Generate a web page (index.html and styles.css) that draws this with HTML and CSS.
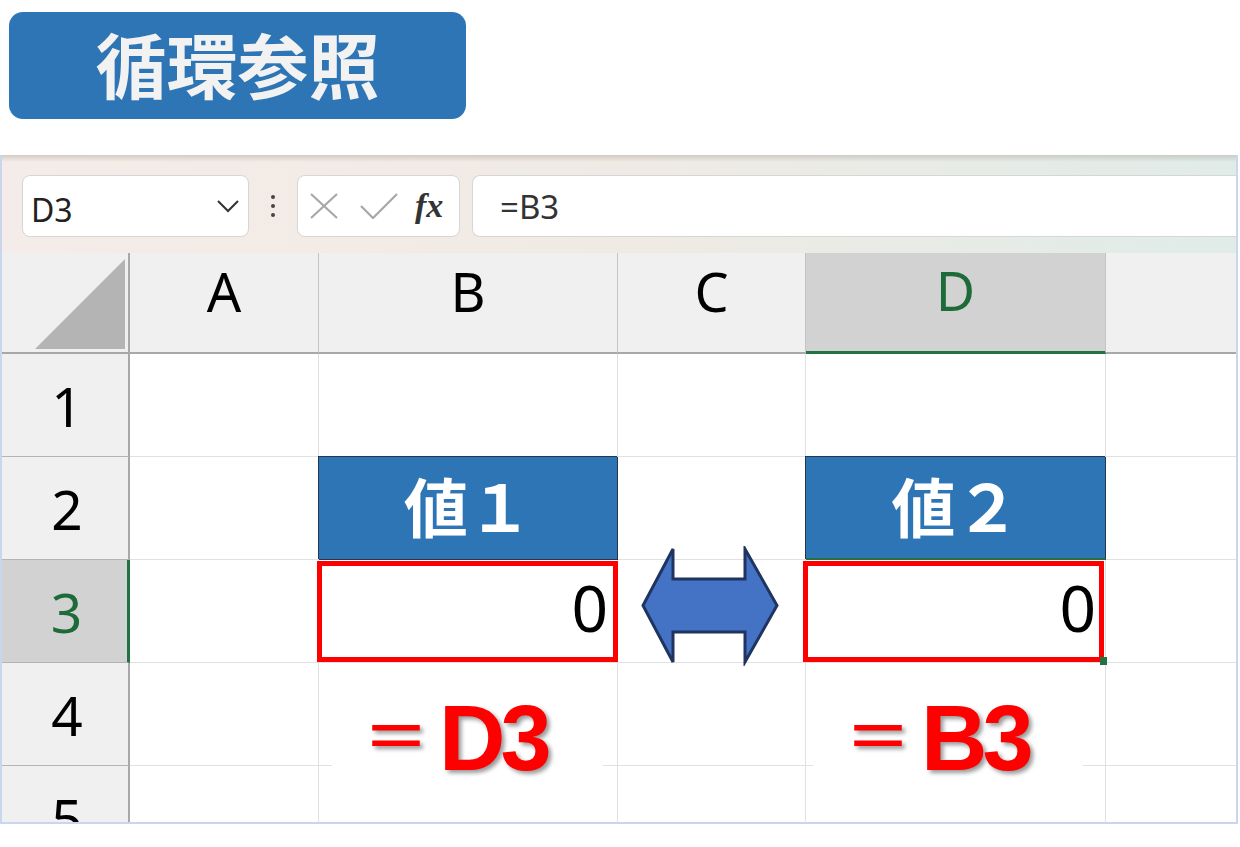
FILE: index.html
```html
<!DOCTYPE html>
<html lang="ja">
<head>
  <meta charset="UTF-8">
  <title>循環参照</title>
  <link rel="stylesheet" href="styles.css">
</head>
<body>
  <div class="title">循環参照</div>

  <div class="sheet">
    <div class="formula-bar">
      <div class="name-box">
        <span>D3</span>
        <svg class="chevron" width="24" height="14" viewBox="0 0 24 14"><polyline points="2,2 12,12 22,2" fill="none" stroke="#333" stroke-width="2"/></svg>
      </div>
      <div class="dots"><i></i><i></i><i></i></div>
      <div class="fx-box">
        <svg width="88" height="26" viewBox="0 0 88 26">
          <g fill="none" stroke="#a8a8a8" stroke-width="2.2">
            <line x1="1" y1="1" x2="27" y2="25"/>
            <line x1="27" y1="1" x2="1" y2="25"/>
            <polyline points="51,13 63,25 87,1"/>
          </g>
        </svg>
        <span class="fx">fx</span>
      </div>
      <div class="formula-input">=B3</div>
    </div>

    <div class="grid">
      <div class="corner">
        <svg width="128" height="101" viewBox="0 0 128 101"><polygon points="123,6 123,96 33,96" fill="#b4b4b4"/></svg>
      </div>
      <div class="col-head">A</div>
      <div class="col-head">B</div>
      <div class="col-head">C</div>
      <div class="col-head selected">D</div>
      <div class="col-head last"></div>

      <div class="row-head">1</div>
      <div class="cell"></div>
      <div class="cell"></div>
      <div class="cell"></div>
      <div class="cell"></div>
      <div class="cell last"></div>

      <div class="row-head">2</div>
      <div class="cell"></div>
      <div class="cell value-head">値１</div>
      <div class="cell"></div>
      <div class="cell value-head above-sel">値２</div>
      <div class="cell last"></div>

      <div class="row-head selected">3</div>
      <div class="cell"></div>
      <div class="cell value ref-b">0</div>
      <div class="cell"></div>
      <div class="cell value ref-d">0<span class="fill-handle"></span></div>
      <div class="cell last"></div>

      <div class="row-head">4</div>
      <div class="cell"></div>
      <div class="cell"></div>
      <div class="cell"></div>
      <div class="cell"></div>
      <div class="cell last"></div>

      <div class="row-head">5</div>
      <div class="cell"></div>
      <div class="cell"></div>
      <div class="cell"></div>
      <div class="cell"></div>
      <div class="cell last"></div>

      <svg class="arrow" width="140" height="120" viewBox="0 0 140 120">
        <polygon points="3,59.5 33,3 33,33 105,33 105,3 137,59.5 105,116 105,86 33,86 33,116" fill="#4472c4" stroke="#1f3560" stroke-width="3"/>
      </svg>

      <div class="label label-b"><span class="eq">＝</span>D3</div>
      <div class="label label-d"><span class="eq">＝</span>B3</div>
    </div>
  </div>
</body>
</html>
```

FILE: styles.css
```css
body {
  margin: 0;
  background: #fff;
  font-family: "Noto Sans", sans-serif;
  color: #000;
}
.title {
  margin: 12px 0 0 9px;
  width: 457px;
  height: 107px;
  box-sizing: border-box;
  padding-bottom: 8px;
  background: #2e75b6;
  border-radius: 14px;
  color: #f2f2f2;
  font: 700 71px "Noto Sans CJK JP", sans-serif;
  display: flex;
  justify-content: center;
  align-items: center;
}
.sheet {
  margin-top: 36px;
  width: 1238px;
  box-sizing: border-box;
  border: 2px solid #c9d6ee;
  border-top: none;
}

/* formula bar */
.formula-bar {
  height: 98px;
  box-sizing: border-box;
  padding: 20px 0 0 20px;
  display: flex;
  align-items: flex-start;
  overflow: hidden;
  background:
    linear-gradient(to bottom, rgba(140, 130, 120, 0.3), rgba(140, 130, 120, 0) 7px),
    linear-gradient(to right, #f4ece8 0%, #f0eae4 50%, #e0ece8 100%);
}
.name-box, .fx-box, .formula-input {
  height: 62px;
  box-sizing: border-box;
  background: #fff;
  border: 1px solid #d6d6d6;
  border-radius: 8px;
}
.name-box {
  width: 227px;
  display: flex;
  align-items: center;
  justify-content: space-between;
  padding: 6px 8px 0 8px;
  font-size: 32px;
  color: #222;
}
.chevron {
  margin-top: -6px;
}
.dots {
  width: 48px;
  padding-top: 20px;
  display: flex;
  flex-direction: column;
  align-items: center;
  gap: 5px;
}
.dots i {
  width: 4px;
  height: 4px;
  border-radius: 50%;
  background: #444;
}
.fx-box {
  width: 163px;
  display: flex;
  align-items: center;
  padding-left: 12px;
}
.fx {
  margin-left: 17px;
  font: italic 700 34px "Liberation Serif", serif;
  color: #333;
}
.formula-input {
  flex: 1;
  margin-left: 12px;
  border-right: none;
  border-radius: 8px 0 0 8px;
  padding-left: 27px;
  display: flex;
  align-items: center;
  font-size: 33px;
  color: #333;
}

/* grid */
.grid {
  position: relative;
  height: 569px;
  overflow: hidden;
  display: grid;
  grid-template-columns: 128px 189px 299px 188px 300px 1fr;
  grid-template-rows: 101px repeat(5, 103px);
}
.corner, .col-head, .row-head {
  background: #f0f0f0;
  box-sizing: border-box;
}
.corner {
  border-right: 2px solid #a8a8a8;
  border-bottom: 2px solid #a8a8a8;
}
.corner svg {
  display: block;
}
.col-head {
  border-right: 1px solid #c4c4c4;
  border-bottom: 2px solid #a8a8a8;
  font-size: 54px;
  display: flex;
  justify-content: center;
  align-items: center;
  padding-bottom: 24px;
}
.col-head.selected {
  background: #d2d2d2;
  color: #1e6b3a;
  border-bottom: 3px solid #217346;
}
.col-head.last {
  border-right: none;
}
.row-head {
  border-right: 2px solid #a8a8a8;
  border-bottom: 1px solid #b4b4b4;
  font-size: 55px;
  line-height: 1;
  display: flex;
  justify-content: center;
  align-items: center;
  padding-left: 4px;
}
.row-head.selected {
  background: #d2d2d2;
  color: #1e6b3a;
  border-right: 3px solid #217346;
}
.cell {
  box-sizing: border-box;
  border-right: 1px solid #e1e1e1;
  border-bottom: 1px solid #e1e1e1;
}
.cell.last {
  border-right: none;
}
.value-head {
  background: #2e75b6;
  border-color: #24364d;
  box-shadow: -1px -1px 0 #24364d;
  color: #fff;
  font: 700 64px "Noto Sans CJK JP", sans-serif;
  display: flex;
  justify-content: center;
  align-items: center;
  padding-bottom: 8px;
}
.value-head.above-sel {
  border-bottom: 2px solid #217346;
}
.value {
  position: relative;
  z-index: 1;
  font-size: 64px;
  line-height: 1;
  display: flex;
  justify-content: flex-end;
  align-items: center;
  padding: 0 9px 6px 0;
}
.value::after {
  content: "";
  position: absolute;
  border: 5px solid #ff0000;
}
.ref-b::after {
  top: 1px;
  bottom: 0;
  left: -2px;
  right: -1px;
}
.ref-d::after {
  top: 1px;
  bottom: 0;
  left: -3px;
  right: 1px;
}
.fill-handle {
  position: absolute;
  right: -2px;
  bottom: -3px;
  width: 7px;
  height: 8px;
  background: #217346;
  z-index: 2;
}

/* overlays */
.arrow {
  position: absolute;
  left: 638px;
  top: 293px;
  z-index: 2;
}
.label {
  position: absolute;
  top: 431px;
  height: 100px;
  background: #fff;
  z-index: 2;
  box-sizing: border-box;
  color: #ff0000;
  font: 700 92px "Liberation Sans", sans-serif;
  line-height: 100px;
  letter-spacing: -5px;
  white-space: nowrap;
  text-shadow: 3px 3px 4px rgba(0, 0, 0, 0.4);
}
.label-b {
  left: 330px;
  width: 271px;
  padding-left: 31px;
}
.label-d {
  left: 811px;
  width: 270px;
  padding-left: 32px;
}
.eq {
  font: 500 66px "Noto Sans CJK JP", sans-serif;
  letter-spacing: 0;
  margin-right: 10px;
  vertical-align: 9px;
}
```
